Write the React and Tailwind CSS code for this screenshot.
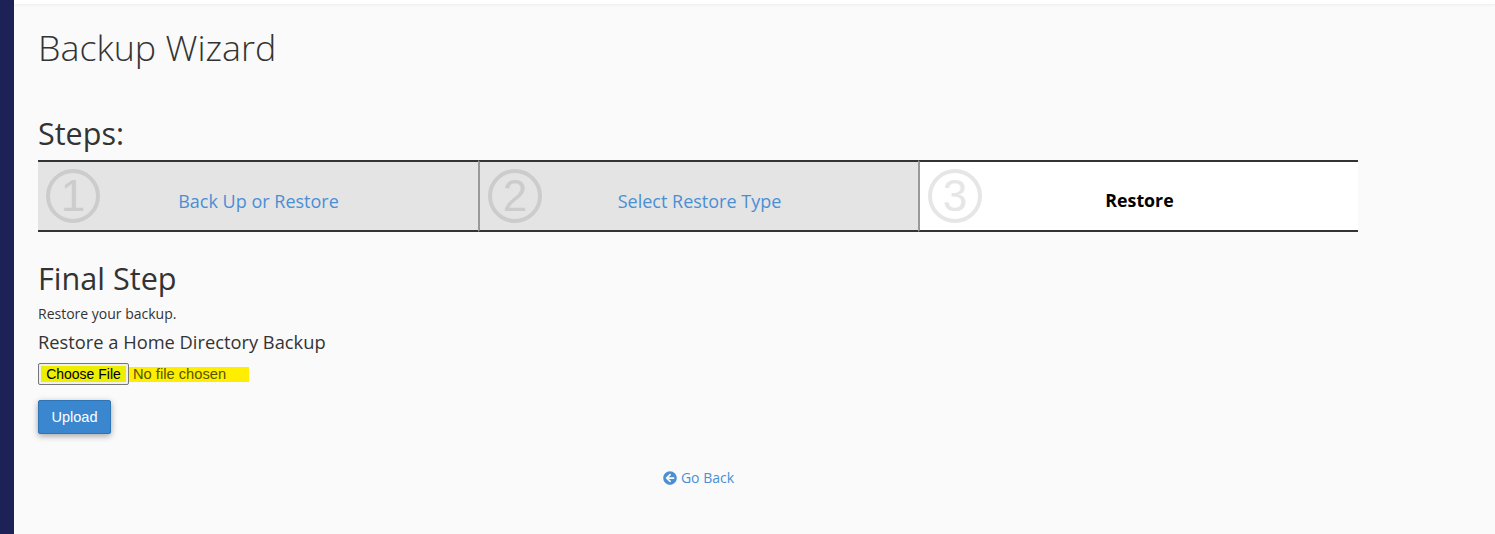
import { FaArrowCircleLeft } from 'react-icons/fa'

const steps = [
  { n: '1', label: 'Back Up or Restore' },
  { n: '2', label: 'Select Restore Type' },
  { n: '3', label: 'Restore', current: true },
]

function Step({ n, label, current, first }) {
  return (
    <div
      className={`flex h-[72px] w-[440px] items-center border-y-2 border-[#333333] pl-[8px] ${
        first ? '' : 'border-l-2 border-l-[#999999]'
      } ${current ? 'bg-white' : 'bg-[#e4e4e4]'}`}
    >
      <div
        className={`flex h-[54px] w-[54px] shrink-0 items-center justify-center rounded-full border-[4px] font-['Liberation_Sans',sans-serif] text-[44px] leading-none font-light ${
          current ? 'border-[#e6e6e6] text-[#e6e6e6]' : 'border-[#cccccc] text-[#cccccc]'
        }`}
      >
        {n}
      </div>
      <div className={`flex-1 text-center pr-[61px] ${current ? 'pt-[8px]' : 'pt-[10px]'}`}>
        {current ? (
          <span className="text-[17.8px] font-bold text-black">{label}</span>
        ) : (
          <a className="text-[18px] text-[#4a8fd4]">{label}</a>
        )}
      </div>
    </div>
  )
}

export default function App() {
  return (
    <div className="flex h-[534px] overflow-hidden bg-[#fafafa] font-['Open_Sans',sans-serif] text-[#333333]">
      <div className="w-[14px] shrink-0 bg-[#1c2255]" />
      <div className="flex-1">
        <div className="h-[4px] bg-white shadow-[0_1px_3px_rgba(0,0,0,0.06)]" />
        <main className="w-[1344px] pl-[24px]">
          <h1 className="mt-[18px] text-[35.8px] leading-[50px] font-light">Backup Wizard</h1>
          <h2 className="mt-[40px] text-[30.5px] leading-[42px]">Steps:</h2>
          <div className="mt-[6px] flex">
            {steps.map((s, i) => (
              <Step key={s.n} {...s} first={i === 0} />
            ))}
          </div>
          <h2 className="mt-[26px] text-[30.6px] leading-[40px]">Final Step</h2>
          <p className="mt-[6px] text-[14px] leading-[20px]">Restore your backup.</p>
          <h3 className="mt-[6px] text-[18.3px] leading-[24px]">Restore a Home Directory Backup</h3>
          <div className="mt-[9px] flex h-[22px] items-center font-['Liberation_Sans',sans-serif] text-[14px]">
            <button className="flex h-[22px] w-[91px] items-center justify-center rounded-[2px] border border-[#767676] bg-[#efefef] px-[2px]">
              <span className="flex h-[16px] w-full items-center justify-center bg-[#eeee00] text-black">
                Choose File
              </span>
            </button>
            <span className="flex h-[15px] w-[120px] items-center bg-[#ffee00] pl-[4px] text-[14.7px] text-[#555500]">
              No file chosen
            </span>
          </div>
          <button className="mt-[15px] h-[34px] w-[73px] rounded-[2px] border border-[#2e75b6] bg-[#3a87cf] pt-[1px] font-['Liberation_Sans',sans-serif] text-[14.5px] text-white shadow-[0_2px_6px_rgba(0,0,0,0.35)]">
            Upload
          </button>
          <div className="mt-[34px] flex items-center justify-center gap-[4px] pl-[1px] text-[14px] leading-[20px] text-[#4a8fd4]">
            <FaArrowCircleLeft className="h-[14px] w-[14px]" />
            <a>Go Back</a>
          </div>
        </main>
      </div>
    </div>
  )
}
